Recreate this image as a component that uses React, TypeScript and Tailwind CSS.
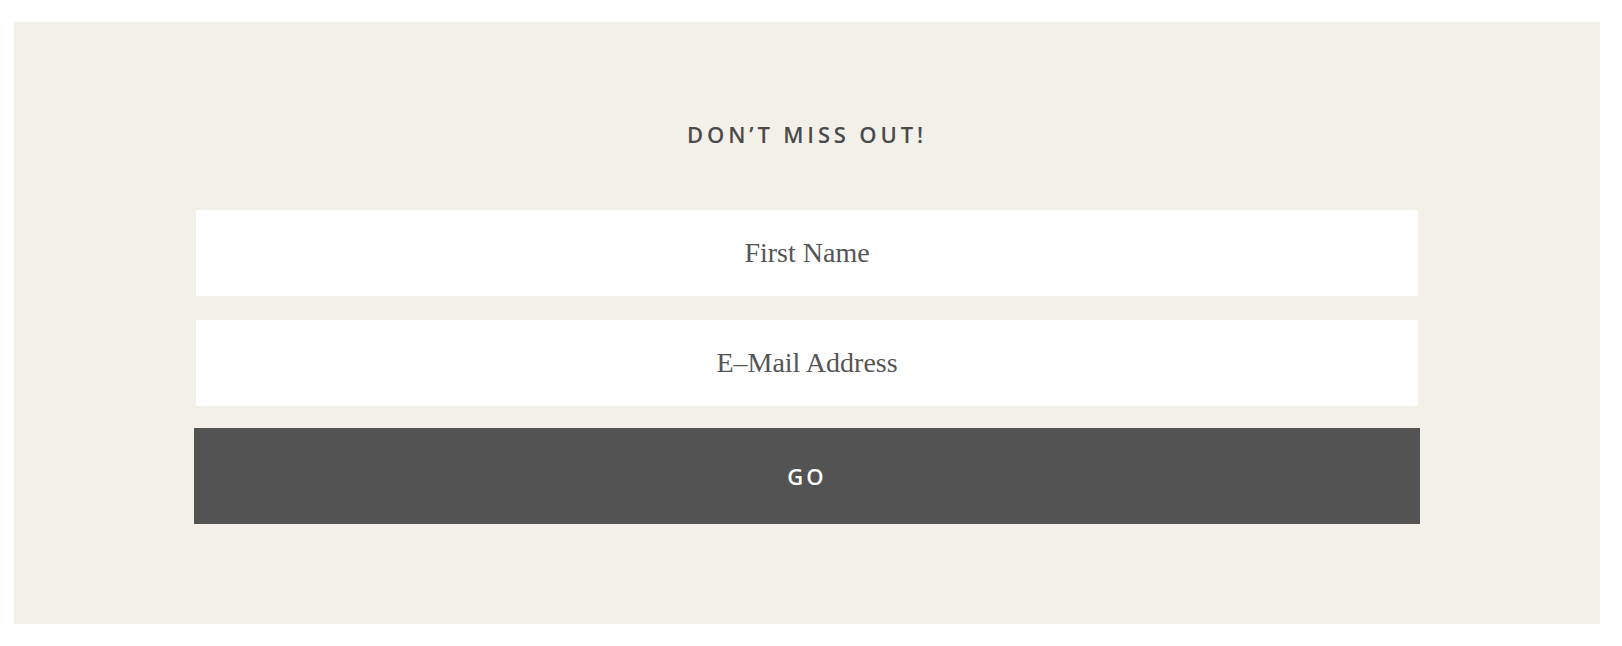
export default function App() {
  return (
    <div className="bg-white w-[1622px] h-[646px] pt-[22px] pl-[14px] pr-[22px]">
      <section className="bg-[#f3f0e9] h-[602px] flex flex-col items-center pt-[97px]">
        <h2 className="font-['Open_Sans',sans-serif] font-semibold text-[22px] leading-[30px] tracking-[0.175em] text-[#4b4b4b] uppercase">
          Don’t Miss Out!
        </h2>

        <form className="w-[1226px] mt-[61px] flex flex-col" onSubmit={(e) => e.preventDefault()}>
          <input
            type="text"
            placeholder="First Name"
            className="mx-[2px] h-[86px] bg-white text-center font-['Liberation_Serif',serif] text-[28px] text-[#4f4f4f] placeholder:text-[#555555] outline-none"
          />
          <input
            type="email"
            placeholder="E–Mail Address"
            className="mx-[2px] mt-[24px] h-[86px] bg-white text-center font-['Liberation_Serif',serif] text-[28px] text-[#4f4f4f] placeholder:text-[#555555] outline-none"
          />
          <button
            type="submit"
            className="mt-[22px] h-[96px] bg-[#535353] text-white font-['Open_Sans',sans-serif] font-semibold text-[22px] tracking-[0.14em]"
          >
            GO
          </button>
        </form>
      </section>
    </div>
  );
}
